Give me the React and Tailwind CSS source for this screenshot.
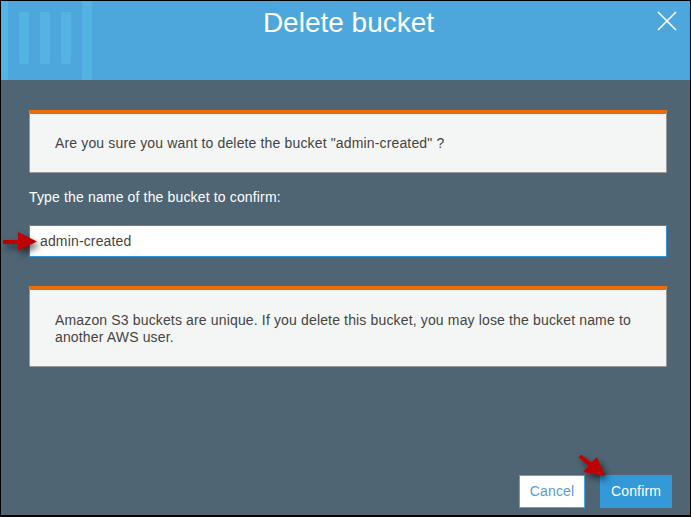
import React from "react";

const font = { fontFamily: '"Liberation Sans", Arial, sans-serif' };

// 背景のバケツ飾り
const BucketDecor = () => (
  <svg className="absolute left-0 top-0" width="92" height="79" viewBox="0 0 92 79">
    <rect x="0" y="0" width="7" height="79" fill="#55b3e3" />
    <rect x="81" y="0" width="10" height="79" fill="#55b3e3" />
    <rect x="0" y="78" width="8" height="1" fill="#8f9da6" />
    <rect x="80" y="78" width="11" height="1" fill="#8f9da6" />
    <rect x="18" y="11" width="10" height="52" rx="2" fill="#55b3e3" />
    <rect x="39" y="11" width="10" height="52" rx="2" fill="#55b3e3" />
    <rect x="60" y="11" width="10" height="52" rx="2" fill="#55b3e3" />
  </svg>
);

// 赤い矢印
const Arrow = ({ className, d }) => (
  <svg
    className={`absolute ${className}`}
    width="50"
    height="40"
    viewBox="0 0 50 40"
    style={{ filter: "drop-shadow(3px 4px 3px rgba(0,0,0,0.55))" }}
  >
    <path d={d} fill="#c00000" />
  </svg>
);

const Notice = ({ children, className }) => (
  <div
    className={`border-t-4 border-t-[#ec6c0a] border-r border-b border-l border-r-[#9a9a9a] border-b-[#9a9a9a] border-l-[#9a9a9a] bg-[#f4f6f5] rounded-b-[2px] pl-[25px] pr-5 text-[14px] tracking-[0.15px] text-[#444444] ${className}`}
  >
    {children}
  </div>
);

const App = () => {
  return (
    <div className="relative w-[691px] h-[517px] bg-black pt-px pl-px pr-px pb-[2px] overflow-hidden" style={font}>
      <div className="h-full flex flex-col bg-[#4f6574]">
        <div className="relative h-[79px] shrink-0 bg-[#4ea7dc] flex justify-center pl-[6px]">
          <BucketDecor />
          <h1 className="pt-1 text-[28px] leading-[36px] text-white">Delete bucket</h1>
          <svg className="absolute right-[13px] top-[10px]" width="20" height="20" viewBox="0 0 20 20">
            <path d="M1 1L19 19M19 1L1 19" stroke="#ffffff" strokeWidth="1.6" fill="none" />
          </svg>
        </div>

        <div className="flex-1 flex flex-col pt-[30px] pl-[28px] pr-[23px]">
          <Notice className="h-[63px] pt-[19px] leading-[20px]">
            Are you sure you want to delete the bucket "admin-created" ?
          </Notice>
          <label className="mt-[14px] text-[14px] tracking-[0.15px] leading-[20px] text-white">
            Type the name of the bucket to confirm:
          </label>
          <input
            readOnly
            value="admin-created"
            className="mt-[18px] h-[32px] w-full bg-white border border-[#2f95d6] pl-[10px] text-[14px] tracking-[0.15px] text-[#444444] outline-none"
          />
          <Notice className="mt-[29px] h-[81px] pt-[22px] leading-[17px]">
            Amazon S3 buckets are unique. If you delete this bucket, you may lose the bucket name to another AWS user.
          </Notice>

          <div className="mt-auto mb-[7px] -mr-[5px] flex justify-end gap-[15px]">
            <button className="w-[66px] h-[33px] bg-white border border-[#4ea7dc] text-[14px] tracking-[0.15px] text-[#5b9bd5]">
              Cancel
            </button>
            <button className="w-[72px] h-[33px] bg-[#3399d8] text-[14px] tracking-[0.15px] text-white">Confirm</button>
          </div>
        </div>
      </div>

      <Arrow className="left-0 top-[225px]" d="M3 15H18V7L37 16.5L18 26V19H3Z" />
      <Arrow className="left-[570px] top-[450px]" d="M8.5 7.5L11 4.5L21.5 12.5L27 7L35 26L13 22L18.5 16Z" />
    </div>
  );
};

export default App;
